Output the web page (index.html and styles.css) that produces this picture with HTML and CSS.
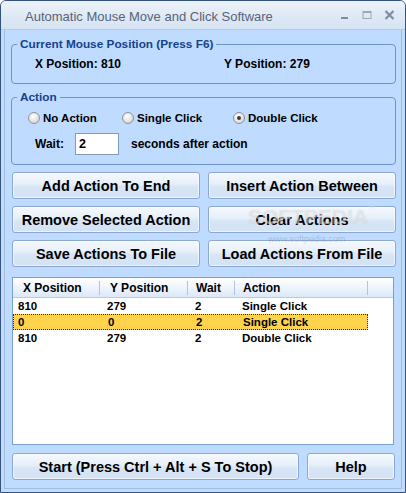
FILE: index.html
```html
<!DOCTYPE html>
<html lang="en">
<head>
    <meta charset="UTF-8">
    <title>Automatic Mouse Move and Click Software</title>
    <link rel="stylesheet" href="styles.css">
</head>
<body>
    <div class="window">
        <div class="titlebar">
            <span class="title">Automatic Mouse Move and Click Software</span>
            <div class="controls">
                <svg width="10" height="10" viewBox="0 0 10 10"><rect x="1" y="7" width="7" height="2" fill="#7d8ca3"/></svg>
                <svg width="10" height="10" viewBox="0 0 10 10"><rect x="1" y="1.5" width="8" height="7" fill="none" stroke="#9aa8bb"/><rect x="1" y="1" width="8" height="2" fill="#9aa8bb"/></svg>
                <svg width="11" height="10" viewBox="0 0 11 10"><path d="M1.5 1 L9.5 9 M9.5 1 L1.5 9" stroke="#7d8ca3" stroke-width="2.2"/></svg>
            </div>
        </div>
        <div class="client">
            <fieldset class="group group-pos">
                <legend>Current Mouse Position (Press F6)</legend>
                <div class="pos-row">
                    <span class="pos-x">X Position: 810</span>
                    <span>Y Position: 279</span>
                </div>
            </fieldset>

            <fieldset class="group group-action">
                <legend>Action</legend>
                <div class="radio-row">
                    <label class="radio r1"><span class="dot"></span>No Action</label>
                    <label class="radio r2"><span class="dot"></span>Single Click</label>
                    <label class="radio"><span class="dot checked"></span>Double Click</label>
                </div>
                <div class="wait-row">
                    <span class="wait-label">Wait:</span>
                    <span class="wait-box">2</span>
                    <span class="wait-after">seconds after action</span>
                </div>
            </fieldset>

            <div class="buttons">
                <button class="btn">Add Action To End</button>
                <button class="btn">Insert Action Between</button>
                <button class="btn">Remove Selected Action</button>
                <button class="btn">Clear Actions</button>
                <button class="btn">Save Actions To File</button>
                <button class="btn">Load Actions From File</button>
                <div class="watermark">SOFTPEDIA<sup>™</sup></div>
                <div class="watermark-url">www.softpedia.com</div>
            </div>

            <div class="list">
                <div class="list-head">
                    <span>X Position</span>
                    <span>Y Position</span>
                    <span>Wait</span>
                    <span>Action</span>
                </div>
                <div class="list-row">
                    <span>810</span><span>279</span><span>2</span><span>Single Click</span>
                </div>
                <div class="list-row selected">
                    <span>0</span><span>0</span><span>2</span><span>Single Click</span>
                </div>
                <div class="list-row">
                    <span>810</span><span>279</span><span>2</span><span>Double Click</span>
                </div>
            </div>

            <div class="bottom">
                <button class="btn start">Start (Press Ctrl + Alt + S To Stop)</button>
                <button class="btn help">Help</button>
            </div>
        </div>
    </div>
</body>
</html>
```

FILE: styles.css
```css
body {
    margin: 0;
    padding: 0;
    font-family: "Liberation Sans", Arial, sans-serif;
    background: #ffffff;
}
.window {
    width: 406px;
    height: 493px;
    box-sizing: border-box;
    border: 1px solid #34527f;
    border-radius: 6px 6px 0 0;
    background: #c4dcf8;
    display: flex;
    flex-direction: column;
    overflow: hidden;
}
.titlebar {
    height: 28px;
    flex: none;
    display: flex;
    align-items: center;
    padding: 0 10px 0 24px;
    background: linear-gradient(#eef3fa, #e2ebf6 40%, #d6e3f3);
    border-bottom: 1px solid #b5cdec;
}
.title {
    flex: 1;
    font-size: 13px;
    color: #56647a;
    margin-top: 2px;
}
.controls {
    display: flex;
    gap: 12px;
    align-items: center;
}
.client {
    flex: 1;
    margin: 0 3px 3px 3px;
    padding: 7px 5px 0 6px;
    background: #bfdbff;
    border: 1px solid #9fbde6;
    border-top: none;
    display: flex;
    flex-direction: column;
}
.group {
    margin: 0;
    padding: 0;
    border: 1px solid #6f92cb;
    border-radius: 4px;
    box-sizing: border-box;
    font-size: 12px;
    font-weight: bold;
}
.group legend {
    margin-left: 5px;
    padding: 0 3px;
    line-height: 15px;
    font-size: 11.8px;
    color: #15428b;
}
.group-pos {
    height: 47px;
}
.group-action {
    height: 75px;
    margin-top: 6px;
}
.pos-row {
    display: flex;
    margin-top: 4px;
    padding-left: 23px;
    line-height: 16px;
}
.pos-x {
    width: 189px;
}
.radio-row {
    display: flex;
    margin-top: 5px;
    padding-left: 16px;
    line-height: 16px;
    font-size: 11.5px;
}
.radio {
    display: flex;
    align-items: center;
}
.r1 {
    width: 94px;
}
.r2 {
    width: 111px;
}
.dot {
    width: 10px;
    height: 10px;
    border: 1px solid #8f9295;
    border-radius: 50%;
    background: radial-gradient(circle at 40% 35%, #ffffff, #e0e0e0 60%, #c9c9c9);
    margin-right: 3px;
    position: relative;
}
.dot.checked::after {
    content: "";
    position: absolute;
    left: 3px;
    top: 3px;
    width: 4px;
    height: 4px;
    border-radius: 50%;
    background: #3c3c3c;
}
.wait-row {
    display: flex;
    align-items: center;
    margin-top: 7px;
    padding-left: 23px;
}
.wait-label {
    width: 40px;
}
.wait-box {
    width: 44px;
    height: 22px;
    box-sizing: border-box;
    border: 1px solid #7f9db9;
    background: #ffffff;
    padding-left: 3px;
    line-height: 20px;
    font-size: 12.5px;
}
.wait-after {
    margin-left: 12px;
}
.buttons {
    position: relative;
    display: grid;
    grid-template-columns: 1fr 1fr;
    grid-auto-rows: 27px;
    gap: 7px 8px;
    margin: 7px 0 0 1px;
}
.btn {
    font-family: "Liberation Sans", Arial, sans-serif;
    font-size: 14.5px;
    font-weight: bold;
    color: #000000;
    padding: 0;
    border: 1px solid #8ba8d4;
    border-radius: 3px;
    background: linear-gradient(#f5f9fe, #e6eff9 45%, #d7e5f6 55%, #d3e2f4);
    box-shadow: inset 0 0 0 1px rgba(255, 255, 255, 0.6);
}
.watermark {
    position: absolute;
    left: 236px;
    top: 33px;
    font-size: 21px;
    font-weight: bold;
    color: rgba(255, 255, 255, 0.4);
    text-shadow: 0 0 1px rgba(140, 140, 140, 0.3);
    pointer-events: none;
}
.watermark sup {
    font-size: 7px;
    vertical-align: top;
}
.watermark-url {
    position: absolute;
    left: 256px;
    top: 62px;
    font-size: 9px;
    color: rgba(110, 120, 130, 0.3);
    pointer-events: none;
}
.list {
    height: 168px;
    box-sizing: border-box;
    margin: 10px 2px 0 1px;
    background: #ffffff;
    border: 1px solid #7a9fd6;
    font-size: 11.5px;
    font-weight: bold;
}
.list-head {
    display: grid;
    grid-template-columns: 87px 88px 47px 133px;
    height: 19px;
    background: linear-gradient(#ffffff, #eef4fc 50%, #dce8f8);
    border-bottom: 1px solid #b6cbe9;
}
.list-head span {
    font-size: 12px;
    padding-left: 10px;
    border-right: 1px solid #a9c5ee;
    margin: 3px 0;
    line-height: 14px;
}
.list-head span:nth-child(n+3) {
    padding-left: 8px;
}
.list-row {
    display: grid;
    grid-template-columns: 87px 88px 47px 133px;
    height: 16px;
    line-height: 16px;
    width: 355px;
    box-sizing: border-box;
}
.list-row span {
    padding-left: 7px;
}
.list-row span:first-child {
    padding-left: 5px;
}
.list-row.selected {
    background: #ffd44c;
    border: 1px dotted #1a2a60;
    line-height: 14px;
}
.list-row.selected span:first-child {
    padding-left: 4px;
}
.bottom {
    display: flex;
    gap: 8px;
    margin: 8px 0 0 1px;
    height: 27px;
}
.start {
    width: 287px;
}
.help {
    width: 88px;
}
```
